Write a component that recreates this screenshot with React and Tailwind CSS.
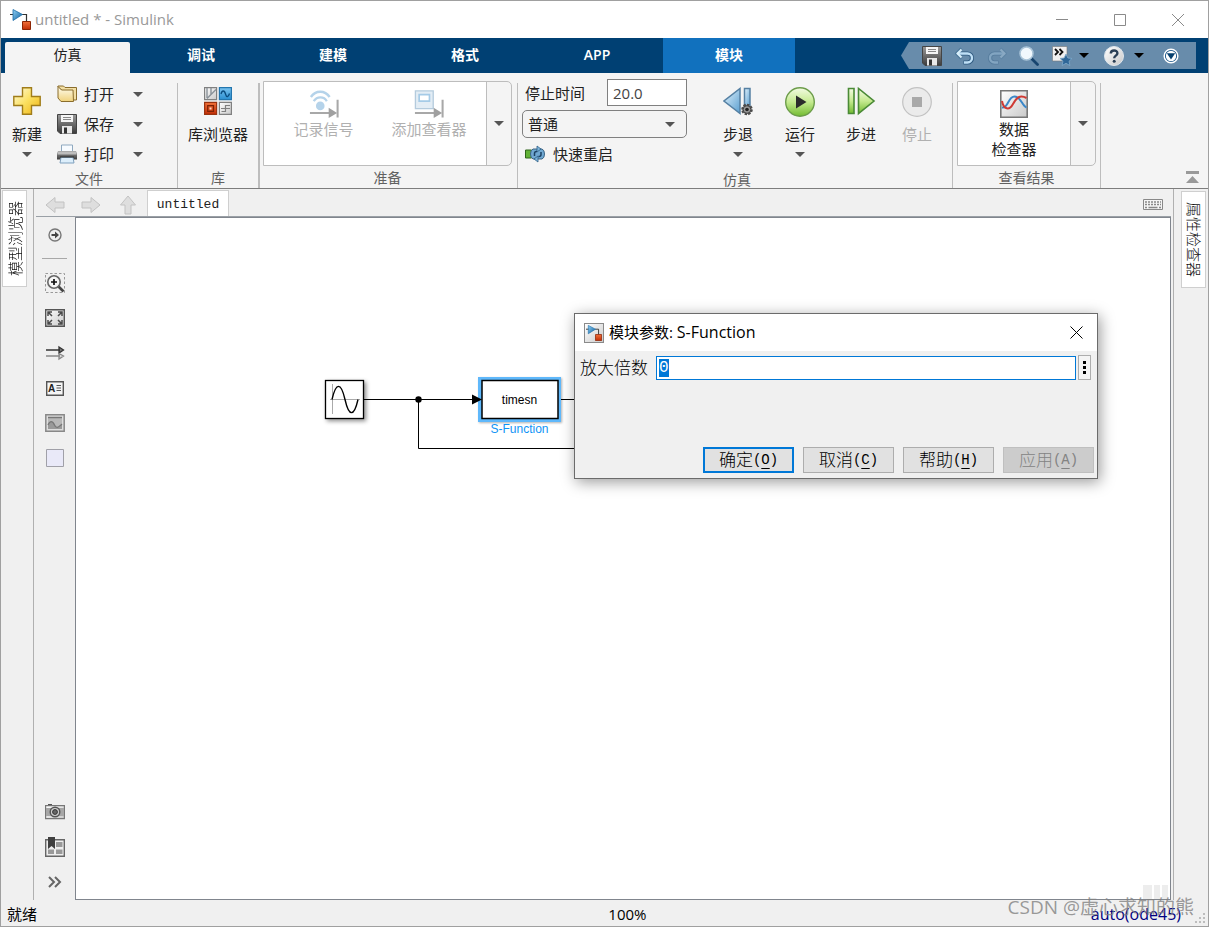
import { useEffect, useRef } from "react";

/* ================= DATA ================= */
const TABS = [
  { label: "调试" },
  { label: "建模" },
  { label: "格式" },
  { label: "APP" },
  { label: "模块", active: true },
];

const PALETTE = [
  { label: "缩放", Icon: ZoomIcon },
  { label: "适应视图", Icon: FitIcon },
  { label: "信号", Icon: SignalsIcon },
  { label: "注释", Icon: AnnotationIcon },
  { label: "图像", Icon: ImageIcon },
  { label: "区域", Icon: AreaIcon },
];

const PALETTE_BOTTOM = [
  { label: "截图", Icon: CameraIcon },
  { label: "书签", Icon: BookmarkIcon },
  { label: "更多", Icon: ChevronsIcon },
];

export default function App() {
  return (
    <div className="relative min-h-screen flex flex-col border border-[#a0a0a0] bg-[#f0f0f0] text-[15px] leading-5 text-[#222] font-['Open_Sans','Noto_Sans_CJK_SC',sans-serif]">
      <Gradients />
      <TitleBar />
      <TabBar />
      <Toolstrip />
      <main className="flex flex-1">
        <SidePanel side="left" label="模型浏览器" />
        <Editor />
        <SidePanel side="right" label="属性检查器" />
      </main>
      <StatusBar />
    </div>
  );
}

/* ================= TITLE BAR ================= */
function TitleBar() {
  return (
    <header className="flex items-center h-[37px] bg-white pl-[9px] pr-[24px]">
      <LogoIcon className="w-[21px] h-[21px]" />
      <h1 className="ml-[4px] pb-px text-[#999]">untitled * - Simulink</h1>
      <div className="ml-auto flex gap-[46px] text-[#8a8a8a]">
        <button aria-label="最小化">
          <svg width="12" height="12" stroke="currentColor"><path d="M0 5.5h12" /></svg>
        </button>
        <button aria-label="最大化">
          <svg width="12" height="12" fill="none" stroke="currentColor"><path d="M.5.5h11v11H.5z" /></svg>
        </button>
        <button aria-label="关闭">
          <svg width="12" height="12" stroke="currentColor"><path d="M0 0l12 12M12 0L0 12" /></svg>
        </button>
      </div>
    </header>
  );
}

/* ================= TAB BAR ================= */
function TabBar() {
  return (
    <nav className="flex h-[35px] bg-[#004073] pl-[4px] pr-[12px]">
      <button className="w-[125px] mt-[4px] mr-[5px] pb-[5px] bg-[#f4f4f4] rounded-t-[2px] text-[14px]">仿真</button>
      {TABS.map((tab) => (
        <button
          key={tab.label}
          className={`w-[132px] pb-[2px] text-[14px] font-semibold text-white ${tab.active ? "bg-[#1171be]" : ""}`}
        >
          {tab.label}
        </button>
      ))}
      <div className="ml-auto mt-[4px] flex items-center w-[295px] h-[27px] pl-[21px] bg-[#688cab] [clip-path:polygon(8px_0,100%_0,100%_100%,8px_100%,0_50%)]">
        <button aria-label="保存"><SaveIcon className="w-5 h-5" /></button>
        <button aria-label="撤销" className="ml-[13px]"><UndoIcon className="w-5 h-5" /></button>
        <button aria-label="重做" className="ml-[12px] opacity-30"><UndoIcon className="w-5 h-5 -scale-x-100" /></button>
        <button aria-label="搜索" className="ml-[12px]"><SearchIcon className="w-5 h-5" /></button>
        <button aria-label="收藏" className="ml-[13px]"><FavoriteIcon className="w-5 h-5" /></button>
        <button aria-label="收藏菜单" className="ml-[7px] text-black"><Caret /></button>
        <button aria-label="帮助" className="ml-[15px]"><HelpIcon className="w-5 h-5" /></button>
        <button aria-label="帮助菜单" className="ml-[10px] text-black"><Caret /></button>
        <button aria-label="自定义" className="ml-[19px]"><CustomizeIcon className="w-[16px] h-[16px]" /></button>
      </div>
    </nav>
  );
}

/* ================= TOOLSTRIP ================= */
function Toolstrip() {
  return (
    <section className="flex h-[116px] bg-[#f4f4f4] border-b border-[#7d7d7d]">
      <Group label="文件" className="w-[176px]">
        <BigButton label="新建" menu className="w-[52px] pt-[8px]"><PlusIcon className="w-7 h-7" /></BigButton>
        <div className="flex flex-col pl-[4px]">
          <FileRow label="打开" Icon={FolderIcon} />
          <FileRow label="保存" Icon={SaveIcon} />
          <FileRow label="打印" Icon={PrintIcon} />
        </div>
      </Group>
      <Divider />
      <Group label="库" className="w-[80px]">
        <BigButton label="库浏览器" className="w-full pt-[8px]"><LibraryIcon className="w-7 h-7" /></BigButton>
      </Group>
      <Divider thick />
      <Group label="准备" className="w-[257px] pl-[3px] pr-[5px]">
        <Gallery menuLabel="准备菜单">
          <button disabled className="flex flex-col items-center w-[119px] pt-[7px] text-[#b0b0b0]">
            <LogSignalIcon className="w-[30px] h-[30px]" />
            记录信号
          </button>
          <button disabled className="flex flex-col items-center w-[92px] pt-[7px] text-[#b0b0b0]">
            <ViewerIcon className="w-[30px] h-[30px]" />
            <span className="whitespace-nowrap">添加查看器</span>
          </button>
        </Gallery>
      </Group>
      <Divider />
      <Group label="仿真" className="w-[434px] pl-[4px]">
        <div className="flex flex-col w-[165px]">
          <div className="flex items-center justify-between">
            <label htmlFor="stop" className="pl-[3px]">停止时间</label>
            <input id="stop" defaultValue="20.0" className="w-[80px] h-[27px] px-[5px] bg-white border border-[#808080] text-[#444]" />
          </div>
          <div className="relative mt-[4px]">
            <select aria-label="仿真模式" className="appearance-none w-full h-[28px] pl-[5px] rounded-[5px] border border-[#808080]">
              <option>普通</option>
            </select>
            <span className="absolute right-[12px] top-[12px] text-[#555] pointer-events-none"><Caret /></span>
          </div>
          <button className="flex items-center gap-[8px] h-[32px] pl-[3px]">
            <RestartIcon className="w-5 h-[18px]" />
            快速重启
          </button>
        </div>
        <div className="flex pl-[20px]">
          <BigButton label="步退" menu className="w-[62px] pt-[8px]"><StepBackIcon className="w-[30px] h-[30px]" /></BigButton>
          <BigButton label="运行" menu className="w-[62px] pt-[8px]"><RunIcon className="w-[30px] h-[30px]" /></BigButton>
          <BigButton label="步进" className="w-[60px] pt-[8px]"><StepForwardIcon className="w-[30px] h-[30px]" /></BigButton>
          <BigButton label="停止" disabled className="w-[52px] pt-[8px]"><StopIcon className="w-[30px] h-[30px]" /></BigButton>
        </div>
      </Group>
      <Divider />
      <Group label="查看结果" className="w-[147px] px-[4px]">
        <Gallery menuLabel="查看结果菜单">
          <button className="flex flex-col items-center w-full pt-[8px]">
            <InspectorIcon className="w-7 h-7 mb-px" />
            数据<br />检查器
          </button>
        </Gallery>
      </Group>
      <Divider />
      <button aria-label="折叠工具条" className="ml-auto self-end mr-[9px] mb-[4px]">
        <svg width="13" height="14" className="block" fill="#999"><path d="M0 1h13v3H0zM6.5 6l6.5 7H0z" /></svg>
      </button>
    </section>
  );
}

function Group({ label, className, children }) {
  return (
    <div className={`flex flex-col pt-[6px] ${className}`}>
      <div className="flex h-[91px]">{children}</div>
      <div className="text-center text-[14px] leading-5 text-[#616161]">{label}</div>
    </div>
  );
}

function Divider({ thick }) {
  return <div className={`mt-[10px] bg-[#bdbdbd] ${thick ? "w-[2px]" : "w-px"}`} />;
}

function BigButton({ label, menu, disabled, className, children }) {
  return (
    <button
      disabled={disabled}
      className={`flex flex-col items-center ${disabled ? "text-[#b0b0b0]" : ""} ${className}`}
    >
      <span className="h-[37px]">{children}</span>
      <span>{label}</span>
      {menu && <span className="mt-[8px] text-[#555]"><Caret /></span>}
    </button>
  );
}

function FileRow({ label, Icon }) {
  return (
    <button className="flex items-center h-[30px]">
      <Icon className="w-5 h-5" />
      <span className="ml-[7px] pb-px">{label}</span>
      <span className="ml-[19px] text-[#555]"><Caret /></span>
    </button>
  );
}

function Gallery({ menuLabel, children }) {
  return (
    <div className="flex flex-1 h-[85px] mt-[2px] border border-[#bdbdbd] rounded-r-[5px] overflow-hidden">
      <div className="flex flex-1 bg-white">{children}</div>
      <button aria-label={menuLabel} className="flex items-center justify-center w-[25px] border-l border-[#bdbdbd] text-[#555]">
        <Caret />
      </button>
    </div>
  );
}

/* ================= SIDE PANELS ================= */
function SidePanel({ side, label }) {
  const left = side === "left";
  return (
    <aside className={`flex items-start ${left ? "w-[33px] pl-px pt-px border-r" : "w-[35px] pl-[7px] pt-[2px] border-l"} border-[#b0b0b0]`}>
      <button className="w-[25px] h-[97px] flex items-center justify-center bg-white border border-[#cfcfcf]">
        <span className={`whitespace-nowrap font-light text-[#111] [writing-mode:vertical-rl] [text-orientation:sideways] ${left ? "rotate-180" : ""}`}>
          {label}
        </span>
      </button>
    </aside>
  );
}

/* ================= EDITOR ================= */
function Editor() {
  return (
    <div className="flex flex-col flex-1 pl-[2px] pr-[2px]">
      <div className="flex items-end h-[28px] border-b border-[#9aa0a6]">
        <button aria-label="后退" className="ml-[9px] mb-px"><NavArrow className="w-5 h-5" /></button>
        <button aria-label="前进" className="ml-[16px] mb-px"><NavArrow className="w-5 h-5 rotate-180" /></button>
        <button aria-label="向上" className="ml-[17px] mb-px"><NavArrow className="w-5 h-5 rotate-90" /></button>
        <button className="ml-[9px] w-[82px] h-[26px] pt-[3px] bg-white border border-b-0 border-[#cfcfcf] text-[13px] font-['Liberation_Mono',monospace]">
          untitled
        </button>
        <button aria-label="键盘" className="ml-auto mr-[8px] mb-[6px]"><KeyboardIcon /></button>
      </div>
      <div className="flex flex-1">
        <div className="flex flex-col w-[39px] pr-[2px] pb-px">
          <PaletteButton label="隐藏浏览器" Icon={CircleArrowIcon} />
          <div className="h-[13px] px-[6px] pt-[6px]"><hr className="border-[#a8a8a8]" /></div>
          {PALETTE.map((item) => <PaletteButton key={item.label} {...item} />)}
          <div className="flex-1" />
          {PALETTE_BOTTOM.map((item) => <PaletteButton key={item.label} {...item} />)}
        </div>
        <div className="relative flex-1 bg-white border border-[#80858d]">
          <Diagram />
          <svg className="absolute right-px bottom-0" width="26" height="14" fill="#ededed">
            <path d="M0 0h9v14H0zM11 0h6v14h-6zM19 0h6v14h-6z" />
          </svg>
          <ParamDialog />
        </div>
      </div>
    </div>
  );
}

function PaletteButton({ label, Icon }) {
  return (
    <button aria-label={label} className="flex items-center justify-center h-[35px]">
      <Icon className="w-5 h-5" />
    </button>
  );
}

function Diagram() {
  return (
    <svg className="absolute inset-0 w-full h-full" fontFamily="Liberation Sans, Arial, sans-serif" fontSize="12">
      {/* wires */}
      <path d="M288 181.500H398M482 181.500H520M342.500 181.500V230.500H520" fill="none" stroke="#000" />
      <circle cx="342.500" cy="181.500" r="3.200" />
      {/* sine source */}
      <g className="drop-shadow-[2px_2px_2px_rgba(0,0,0,0.45)]">
        <rect x="249.500" y="162.500" width="38" height="38" fill="#fff" stroke="#000" strokeWidth="1.300" />
      </g>
      <path d="M256.500 166v30M254 181.500h30" stroke="#aaa" />
      <path d="M256 181.500C260 164 265 164 269 181.500S278 199 282 181.500" fill="none" stroke="#000" strokeWidth="1.400" />
      {/* s-function */}
      <g className="drop-shadow-[1px_1px_1px_rgba(0,0,0,0.3)]">
        <rect x="402" y="159" width="83" height="45" fill="#5fb8fb" />
      </g>
      <rect x="406" y="162.500" width="76" height="38" fill="#fff" stroke="#000" strokeWidth="1.500" />
      <path d="M396 176.500l10 5-10 5z" />
      <text x="443.500" y="186" textAnchor="middle">timesn</text>
      <text x="443.500" y="215" textAnchor="middle" fill="#1094f5">S-Function</text>
    </svg>
  );
}

/* ================= PARAMETER DIALOG ================= */
function ParamDialog() {
  const inputRef = useRef(null);

  useEffect(() => {
    inputRef.current.focus();
    inputRef.current.select();
  }, []);

  return (
    <div
      role="dialog"
      aria-label="模块参数: S-Function"
      className="absolute left-[498px] top-[95px] w-[524px] h-[166px] flex flex-col bg-[#f0f0f0] border border-[#6b6b6b] shadow-[2px_3px_14px_rgba(0,0,0,0.4)]"
    >
      <div className="flex items-center h-[37px] bg-white pl-[9px] pr-[14px] text-black">
        <span className="w-5 h-5 border border-[#8a8a8a] bg-gradient-to-br from-white to-[#ccc]">
          <LogoIcon className="w-[16px] h-[16px] m-px" />
        </span>
        <h2 className="ml-[5px] pb-[2px]">模块参数: <span className="text-[16px]">S-Function</span></h2>
        <button aria-label="关闭" className="ml-auto">
          <svg width="13" height="13" className="block" stroke="#000"><path d="M.5.5l12 12M12.500.5l-12 12" /></svg>
        </button>
      </div>
      <div className="flex items-center mt-[4px] pl-[5px] pr-[6px]">
        <label htmlFor="gain" className="w-[76px] text-[17px] font-light text-black">放大倍数</label>
        <input
          ref={inputRef}
          id="gain"
          defaultValue="0"
          className="flex-1 min-w-0 h-[24px] px-[2px] bg-white border border-[#0078d7] outline-none text-[16px] font-['Liberation_Mono',monospace] selection:bg-[#0078d7] selection:text-white"
        />
        <button aria-label="更多选项" className="flex items-center justify-center ml-[2px] w-[13px] h-[25px] bg-[#f4f4f4] border border-[#adadad]">
          <svg width="3" height="13"><path d="M0 0h3v3H0zM0 5h3v3H0zM0 10h3v3H0z" /></svg>
        </button>
      </div>
      <div className="flex justify-end gap-[9px] mt-auto mb-[5px] pr-[3px]">
        <DialogButton label="确定" hotkey="O" primary />
        <DialogButton label="取消" hotkey="C" />
        <DialogButton label="帮助" hotkey="H" />
        <DialogButton label="应用" hotkey="A" disabled />
      </div>
    </div>
  );
}

function DialogButton({ label, hotkey, primary, disabled }) {
  let style = "border border-[#adadad] bg-[#e1e1e1] text-black";
  if (primary) style = "border-2 border-[#0078d7] bg-[#e1e1e1] text-black";
  if (disabled) style = "border border-[#bfbfbf] bg-[#cccccc] text-[#838383]";

  return (
    <button disabled={disabled} className={`flex items-center justify-center w-[91px] h-[26px] text-[17px] font-light ${style}`}>
      {label}
      <span className="text-[14px] font-['Liberation_Mono',monospace]">
        (<span className="underline underline-offset-4">{hotkey}</span>)
      </span>
    </button>
  );
}

/* ================= STATUS BAR ================= */
function StatusBar() {
  return (
    <footer className="grid grid-cols-[9fr_auto_8fr] items-center h-[26px] pt-px pl-[6px] pr-[27px] text-black">
      <span>就绪</span>
      <span>100%</span>
      <a href="#solver" className="justify-self-end text-[16px] text-[#000080]">auto(ode45)</a>
      <span className="absolute right-[14px] bottom-[7px] text-[19px] leading-6 text-[#808080]/80 pointer-events-none">
        CSDN @虚心求知的熊
      </span>
      <svg className="absolute right-[2px] bottom-[2px]" width="11" height="11" fill="#bdbdbd">
        <path d="M8 0h2v2H8zM4 4h2v2H4zM8 4h2v2H8zM0 8h2v2H0zM4 8h2v2H4zM8 8h2v2H8z" />
      </svg>
    </footer>
  );
}

/* ================= ICONS ================= */
function Gradients() {
  return (
    <svg className="absolute w-0 h-0" aria-hidden="true">
      <defs>
        <linearGradient id="blue" x1="0" y1="0" x2="1" y2="1"><stop stopColor="#8fd0f5" /><stop offset="1" stopColor="#0a5c9c" /></linearGradient>
        <linearGradient id="sky" x1="0" y1="0" x2="0" y2="1"><stop stopColor="#7cc4f0" /><stop offset="1" stopColor="#2a8fd0" /></linearGradient>
        <linearGradient id="paleBlue" x1="0" y1="0" x2="1" y2="1"><stop stopColor="#e3f3fd" /><stop offset="1" stopColor="#5a9fd0" /></linearGradient>
        <linearGradient id="orange" x1="0" y1="0" x2="0" y2="1"><stop stopColor="#f0713a" /><stop offset="1" stopColor="#c22d05" /></linearGradient>
        <linearGradient id="gold" x1="0" y1="0" x2="1" y2="1"><stop stopColor="#fffce0" /><stop offset=".5" stopColor="#fbe060" /><stop offset="1" stopColor="#eeb010" /></linearGradient>
        <linearGradient id="folder" x1="0" y1="0" x2="0" y2="1"><stop stopColor="#fffdf0" /><stop offset="1" stopColor="#f0d27c" /></linearGradient>
        <linearGradient id="steel" x1="0" y1="0" x2="0" y2="1"><stop stopColor="#9a9a9a" /><stop offset="1" stopColor="#3c3c3c" /></linearGradient>
        <linearGradient id="silver" x1="0" y1="0" x2="1" y2="1"><stop stopColor="#ffffff" /><stop offset="1" stopColor="#c9c9c9" /></linearGradient>
        <linearGradient id="green" x1="0" y1="0" x2="0" y2="1"><stop stopColor="#f4fbe4" /><stop offset=".5" stopColor="#c5ea90" /><stop offset="1" stopColor="#72bb30" /></linearGradient>
      </defs>
    </svg>
  );
}

function Caret() {
  return <svg width="10" height="5" className="block" fill="currentColor"><path d="M0 0h10L5 5z" /></svg>;
}

function LogoIcon({ className }) {
  return (
    <svg viewBox="0 0 21 21" className={className}>
      <path d="M0 5.500h4M12 5.500h4.500v7" fill="none" stroke="#333" strokeWidth="1.200" />
      <path d="M3 .5l9.500 5L3 11.500z" fill="url(#blue)" stroke="#1b6ca8" strokeWidth=".8" />
      <path d="M12.500 12.500h8v8h-8z" fill="url(#orange)" stroke="#8c2505" />
    </svg>
  );
}

function SaveIcon({ className }) {
  return (
    <svg viewBox="0 0 20 20" className={className}>
      <path d="M.5.5h19v19H3l-2.500-2.500z" fill="url(#steel)" stroke="#444" />
      <path d="M4 1h12v7H4z" fill="#f5f5f5" />
      <path d="M6 3.500h8M6 5.500h8" stroke="#888" />
      <path d="M5 12h10v7.500H5z" fill="#e9e9e9" />
      <path d="M7 13.500h3v6H7z" fill="#333" />
    </svg>
  );
}

function UndoIcon({ className }) {
  return (
    <svg viewBox="0 0 20 20" className={className} fill="none">
      <path d="M2.500 7.500h10a4.500 4.500 0 010 9H8.500" stroke="#2f5a80" strokeWidth="4.200" />
      <path d="M6.500 2.500L1.500 7.500l5 5" stroke="#4c7799" strokeWidth="3" />
      <path d="M2.500 7.500h10a4.500 4.500 0 010 9H9" stroke="#bfe0f6" strokeWidth="2.400" />
      <path d="M6.500 3.500l-4 4 4 4" stroke="#d9effb" strokeWidth="2" />
    </svg>
  );
}

function SearchIcon({ className }) {
  return (
    <svg viewBox="0 0 20 20" className={className}>
      <path d="M12 12l6.500 6.500" stroke="#17446e" strokeWidth="2.800" strokeLinecap="round" />
      <circle cx="7.500" cy="7.500" r="6.500" fill="#f1f8fd" stroke="#a9c4d8" strokeWidth="1.500" />
    </svg>
  );
}

function FavoriteIcon({ className }) {
  return (
    <svg viewBox="0 0 20 20" className={className}>
      <path d="M.5.5h14.500v14.500H.5z" fill="#f0f0f0" stroke="#777" strokeWidth=".6" />
      <path d="M3 3l3 3-3 3M7.500 3l3 3-3 3" fill="none" stroke="#111" strokeWidth="1.800" />
      <path d="M14 8l1.900 4 4.100.4-3 2.900.9 4.200-3.900-2.200-3.900 2.200.9-4.200-3-2.900 4.100-.4z" fill="#2f6798" stroke="#82abcb" strokeWidth=".8" />
    </svg>
  );
}

function HelpIcon({ className }) {
  return (
    <svg viewBox="0 0 20 20" className={className}>
      <circle cx="10" cy="10" r="9.500" fill="url(#silver)" stroke="#dfe6ec" />
      <path d="M6.800 7.500c0-4 6.600-4 6.600-.3 0 2.500-3.200 2.400-3.200 5" fill="none" stroke="#2b3f55" strokeWidth="2.400" />
      <circle cx="10.200" cy="15.200" r="1.500" fill="#2b3f55" />
    </svg>
  );
}

function CustomizeIcon({ className }) {
  return (
    <svg viewBox="0 0 16 16" className={className}>
      <circle cx="8" cy="8" r="6.800" fill="#0b4a80" stroke="#fff" strokeWidth="1.500" />
      <circle cx="8" cy="8" r="5.200" fill="#fff" />
      <path d="M3.800 5.200h8.400L8 11.500z" fill="#06406f" />
    </svg>
  );
}

function PlusIcon({ className }) {
  return (
    <svg viewBox="0 0 28 28" className={className}>
      <path d="M9.500.8h9v8.700h8.700v9h-8.700v8.700h-9v-8.700H.8v-9h8.700z" fill="url(#gold)" stroke="#a07d1a" strokeWidth="1.400" />
    </svg>
  );
}

function FolderIcon({ className }) {
  return (
    <svg viewBox="0 0 20 20" className={className} stroke="#8a6d2c" strokeWidth="1">
      <path d="M1 3V2h5.500l1.500 1.500h11.500V16h-3z" fill="#f3dfa4" />
      <path d="M1 2.500l3.500 3.500H16l.5 11.500H4L1 14z" fill="url(#folder)" />
    </svg>
  );
}

function PrintIcon({ className }) {
  return (
    <svg viewBox="0 0 20 20" className={className}>
      <path d="M4.500 1h11v7h-11z" fill="#f7fbff" stroke="#8fa9c0" />
      <path d="M1 7h18l1 3v5.500H0V10z" fill="url(#steel)" />
      <path d="M1 7.500h18l.5 3H.5z" fill="#bdbdbd" />
      <path d="M4 13.500h12l1 5.500H3z" fill="#dceefb" stroke="#7fa0bd" />
      <path d="M3 13h14" stroke="#333" />
    </svg>
  );
}

function LibraryIcon({ className }) {
  return (
    <svg viewBox="0 0 28 28" className={className} fill="none">
      <path d="M.6.600h12v12H.6z" fill="url(#silver)" stroke="#808080" strokeWidth="1.200" />
      <path d="M3 1v10M7 1v7M12 2.500L3 11.500" stroke="#8a9299" strokeWidth="1.400" />
      <path d="M15.400.600h12v12h-12z" fill="url(#sky)" stroke="#2376ae" strokeWidth="1.200" />
      <path d="M17 7c1-4 3.500-4 4.500 0s3 3 4-.5" stroke="#0a4d80" strokeWidth="1.300" />
      <path d="M.6 15.400h12v12H.6z" fill="url(#orange)" stroke="#99320f" strokeWidth="1.200" />
      <path d="M3.700 18.600h5.800v5.800H3.700z" stroke="#7d2205" strokeWidth="1.200" />
      <path d="M5.500 20.500h2v2h-2z" fill="#ffd9c6" />
      <path d="M15.400 15.400h12v12h-12z" fill="url(#silver)" stroke="#808080" strokeWidth="1.200" />
      <path d="M17.500 24.500h4v-6H26M17 21.500h9" stroke="#808080" strokeWidth="1.200" />
    </svg>
  );
}

function LogSignalIcon({ className }) {
  return (
    <svg viewBox="0 0 32 31" className={className} fill="none">
      <path d="M2 8c5-7.500 15-7.500 20 0" stroke="#b5d3ea" strokeWidth="2.600" />
      <path d="M5 12.500c3.500-5.500 11-5.500 14 0" stroke="#b5d3ea" strokeWidth="2.400" />
      <circle cx="12" cy="17.500" r="4.600" fill="#b5d3ea" />
      <path d="M1 25h22M30.500 11v19" stroke="#a8a8a8" strokeWidth="2.200" />
      <path d="M21 19.500L30 25l-9 5.500z" fill="#a0a0a0" />
    </svg>
  );
}

function ViewerIcon({ className }) {
  return (
    <svg viewBox="0 0 32 31" className={className} fill="none">
      <path d="M1.500 1.500h19v19h-19z" fill="#e3edf5" stroke="#b4cbdd" strokeWidth="1.400" />
      <path d="M5.500 5.500h11v7h-11z" fill="#fff" stroke="#a5cbe7" strokeWidth="1.800" />
      <path d="M1 25h22M30.500 11v19" stroke="#a8a8a8" strokeWidth="2.200" />
      <path d="M21 19.500L30 25l-9 5.500z" fill="#a0a0a0" />
    </svg>
  );
}

function RestartIcon({ className }) {
  return (
    <svg viewBox="0 0 20 18" className={className}>
      <path d="M.5 5h6v8h-6z" fill="#62b236" stroke="#2f641b" />
      <path d="M8 4h9q2.500 1 2.500 5T17 14H8q-2.500-1-2.500-5T8 4z" fill="#6fa8d2" stroke="#3c6484" />
      <path d="M12 1l4 3-4 3zM13 11l-4 3 4 3z" fill="#7db4da" stroke="#2d5f88" strokeWidth=".8" />
      <path d="M9.500 11V8.500a2 2 0 012-2H12M16 7v2.500a2 2 0 01-2 2h-.5" fill="none" stroke="#1d4264" strokeWidth="1.500" />
    </svg>
  );
}

function StepBackIcon({ className }) {
  return (
    <svg viewBox="0 0 30 30" className={className}>
      <path d="M17 1.500v25L1 14z" fill="url(#paleBlue)" stroke="#5580a3" strokeWidth="1.500" />
      <path d="M21.500 1.500h5.500v18h-5.500z" fill="url(#paleBlue)" stroke="#5580a3" strokeWidth="1.500" />
      <circle cx="24" cy="22.500" r="4.700" fill="#8b8b8b" stroke="#4a4a4a" strokeWidth="2.200" strokeDasharray="2.400 1.200" />
      <circle cx="24" cy="22.500" r="3.800" fill="#999" stroke="#444" />
      <circle cx="24" cy="22.500" r="1.800" fill="#222" />
    </svg>
  );
}

function RunIcon({ className }) {
  return (
    <svg viewBox="0 0 30 30" className={className}>
      <circle cx="15" cy="15" r="14.300" fill="url(#green)" stroke="#6c9c4a" strokeWidth="1.400" />
      <path d="M11 8.500L21.500 15 11 21.500z" fill="#2b2b2b" />
    </svg>
  );
}

function StepForwardIcon({ className }) {
  return (
    <svg viewBox="0 0 30 30" className={className} stroke="#4a8a36" strokeWidth="1.600">
      <path d="M2.500 1.500H8v25H2.500z" fill="url(#green)" />
      <path d="M12.500 1.500v25L28 14z" fill="url(#green)" />
    </svg>
  );
}

function StopIcon({ className }) {
  return (
    <svg viewBox="0 0 30 30" className={className}>
      <circle cx="15" cy="15" r="14.300" fill="#ebebeb" stroke="#c2c2c2" strokeWidth="1.200" />
      <path d="M10 10h10v10H10z" fill="#a9a9a9" />
    </svg>
  );
}

function InspectorIcon({ className }) {
  return (
    <svg viewBox="0 0 28 28" className={className} fill="none">
      <path d="M.8.800h26.400v26.400H.8z" fill="url(#silver)" stroke="#777" strokeWidth="1.600" />
      <path d="M2 17.500C8 19 8 6.500 14.500 6.500S22 16 26.500 17.500" stroke="#3b87c8" strokeWidth="2" />
      <path d="M2 11c1.500 9 7.500 9.500 11 3s7-9.500 13.500-6" stroke="#cf3b35" strokeWidth="2" />
    </svg>
  );
}

function NavArrow({ className }) {
  return (
    <svg viewBox="0 0 20 20" className={className}>
      <path d="M1 10l9-7.500V7h9v6h-9v4.500z" fill="#dedede" stroke="#c2c2c2" />
    </svg>
  );
}

function KeyboardIcon() {
  return (
    <svg width="20" height="11" fill="none" stroke="#888">
      <path d="M.5.5h19v10H.5z" fill="#f4f4f4" />
      <path d="M2 3h16M2 5.500h16" strokeDasharray="2 1" strokeWidth="1.500" />
      <path d="M2 8.500h2M5.500 8.500h9M16 8.500h2" strokeWidth="1.500" />
    </svg>
  );
}

function CircleArrowIcon({ className }) {
  return (
    <svg viewBox="0 0 20 20" className={className}>
      <circle cx="10" cy="10" r="6" fill="#eee" stroke="#777" strokeWidth="1.400" />
      <path d="M6.500 9H10V6.500l4 3.500-4 3.500V11H6.500z" fill="#444" />
    </svg>
  );
}

function ZoomIcon({ className }) {
  return (
    <svg viewBox="0 0 20 20" className={className} fill="none">
      <path d="M.5.5h19v19H.5z" stroke="#999" strokeDasharray="2.500 2" />
      <path d="M13 13l5.500 5.500" stroke="#444" strokeWidth="2.600" />
      <circle cx="9" cy="9" r="6.200" fill="#f5f5f5" stroke="#666" strokeWidth="1.600" />
      <path d="M9 6v6M6 9h6" stroke="#111" strokeWidth="1.700" />
    </svg>
  );
}

function FitIcon({ className }) {
  return (
    <svg viewBox="0 0 20 20" className={className} fill="none">
      <path d="M.7 1.700h18.600v16.600H.7z" fill="url(#silver)" stroke="#555" strokeWidth="1.400" />
      <path d="M3 8V4h4M13 4h4v4M17 12v4h-4M7 16H3v-4M3.500 4.500L7 8M16.500 4.500L13 8M16.500 15.500L13 12M3.500 15.500L7 12" stroke="#4a4a4a" strokeWidth="1.500" />
    </svg>
  );
}

function SignalsIcon({ className }) {
  return (
    <svg viewBox="0 0 20 20" className={className} strokeWidth="1.300">
      <path d="M1 7h14M14 4l4.500 3-4.500 3z" fill="#777" stroke="#333" />
      <path d="M1 13h14M14 10.500l4.500 2.500-4.500 3z" fill="#ddd" stroke="#888" />
    </svg>
  );
}

function AnnotationIcon({ className }) {
  return (
    <svg viewBox="0 0 20 20" className={className}>
      <path d="M1.700 3.700h16.600v13.600H1.700z" fill="#f5f5f5" stroke="#555" strokeWidth="1.400" />
      <text x="3" y="13.500" fontSize="10" fontWeight="bold" fontFamily="Liberation Sans" fill="#222">A</text>
      <path d="M11.500 7.500H16M11.500 10H16M11.500 12.500H16" stroke="#555" />
    </svg>
  );
}

function ImageIcon({ className }) {
  return (
    <svg viewBox="0 0 20 20" className={className}>
      <path d="M.8 1.800h18.400v16.400H.8z" fill="#ddd" stroke="#888" strokeWidth="1.500" />
      <path d="M3 4.500h14V16H3z" fill="#b8b8b8" />
      <path d="M3 12c2-4.500 4.500-4.500 6.500 0s4 2 7.500-1v5H3z" fill="#999" />
      <path d="M3 4.500h14M3 12c2-4.500 4.500-4.500 6.500 0s4 2 7.500-1" fill="none" stroke="#777" strokeWidth="1.300" />
    </svg>
  );
}

function AreaIcon({ className }) {
  return (
    <svg viewBox="0 0 20 20" className={className}>
      <path d="M1.500 1.500h17v17h-17z" fill="#e9e9f8" stroke="#a0a0a8" />
    </svg>
  );
}

function CameraIcon({ className }) {
  return (
    <svg viewBox="0 0 20 20" className={className}>
      <path d="M3 2h4v2H3z" fill="#555" />
      <path d="M.6 3.600h18.800v13H.6z" fill="url(#silver)" stroke="#777" strokeWidth="1.200" />
      <path d="M1 6h18v8H1z" fill="#a6a6a6" />
      <circle cx="10" cy="10" r="4.800" fill="#ccc" stroke="#555" strokeWidth="1.400" />
      <circle cx="10" cy="10" r="2.400" fill="#666" stroke="#333" />
    </svg>
  );
}

function BookmarkIcon({ className }) {
  return (
    <svg viewBox="0 0 20 20" className={className}>
      <path d="M.7 2.700h18.600v16.600H.7z" fill="#eee" stroke="#666" strokeWidth="1.400" />
      <path d="M11 5h6.500v5H11zM11 12.500h6.500v4.500H11zM3 12.500h6V17H3z" fill="#999" />
      <path d="M3 0h7v12l-3.500-3L3 12z" fill="#3f3f3f" />
    </svg>
  );
}

function ChevronsIcon({ className }) {
  return (
    <svg viewBox="0 0 20 20" className={className} fill="none" stroke="#666" strokeWidth="2">
      <path d="M4 5l5 5-5 5M10 5l5 5-5 5" />
    </svg>
  );
}
